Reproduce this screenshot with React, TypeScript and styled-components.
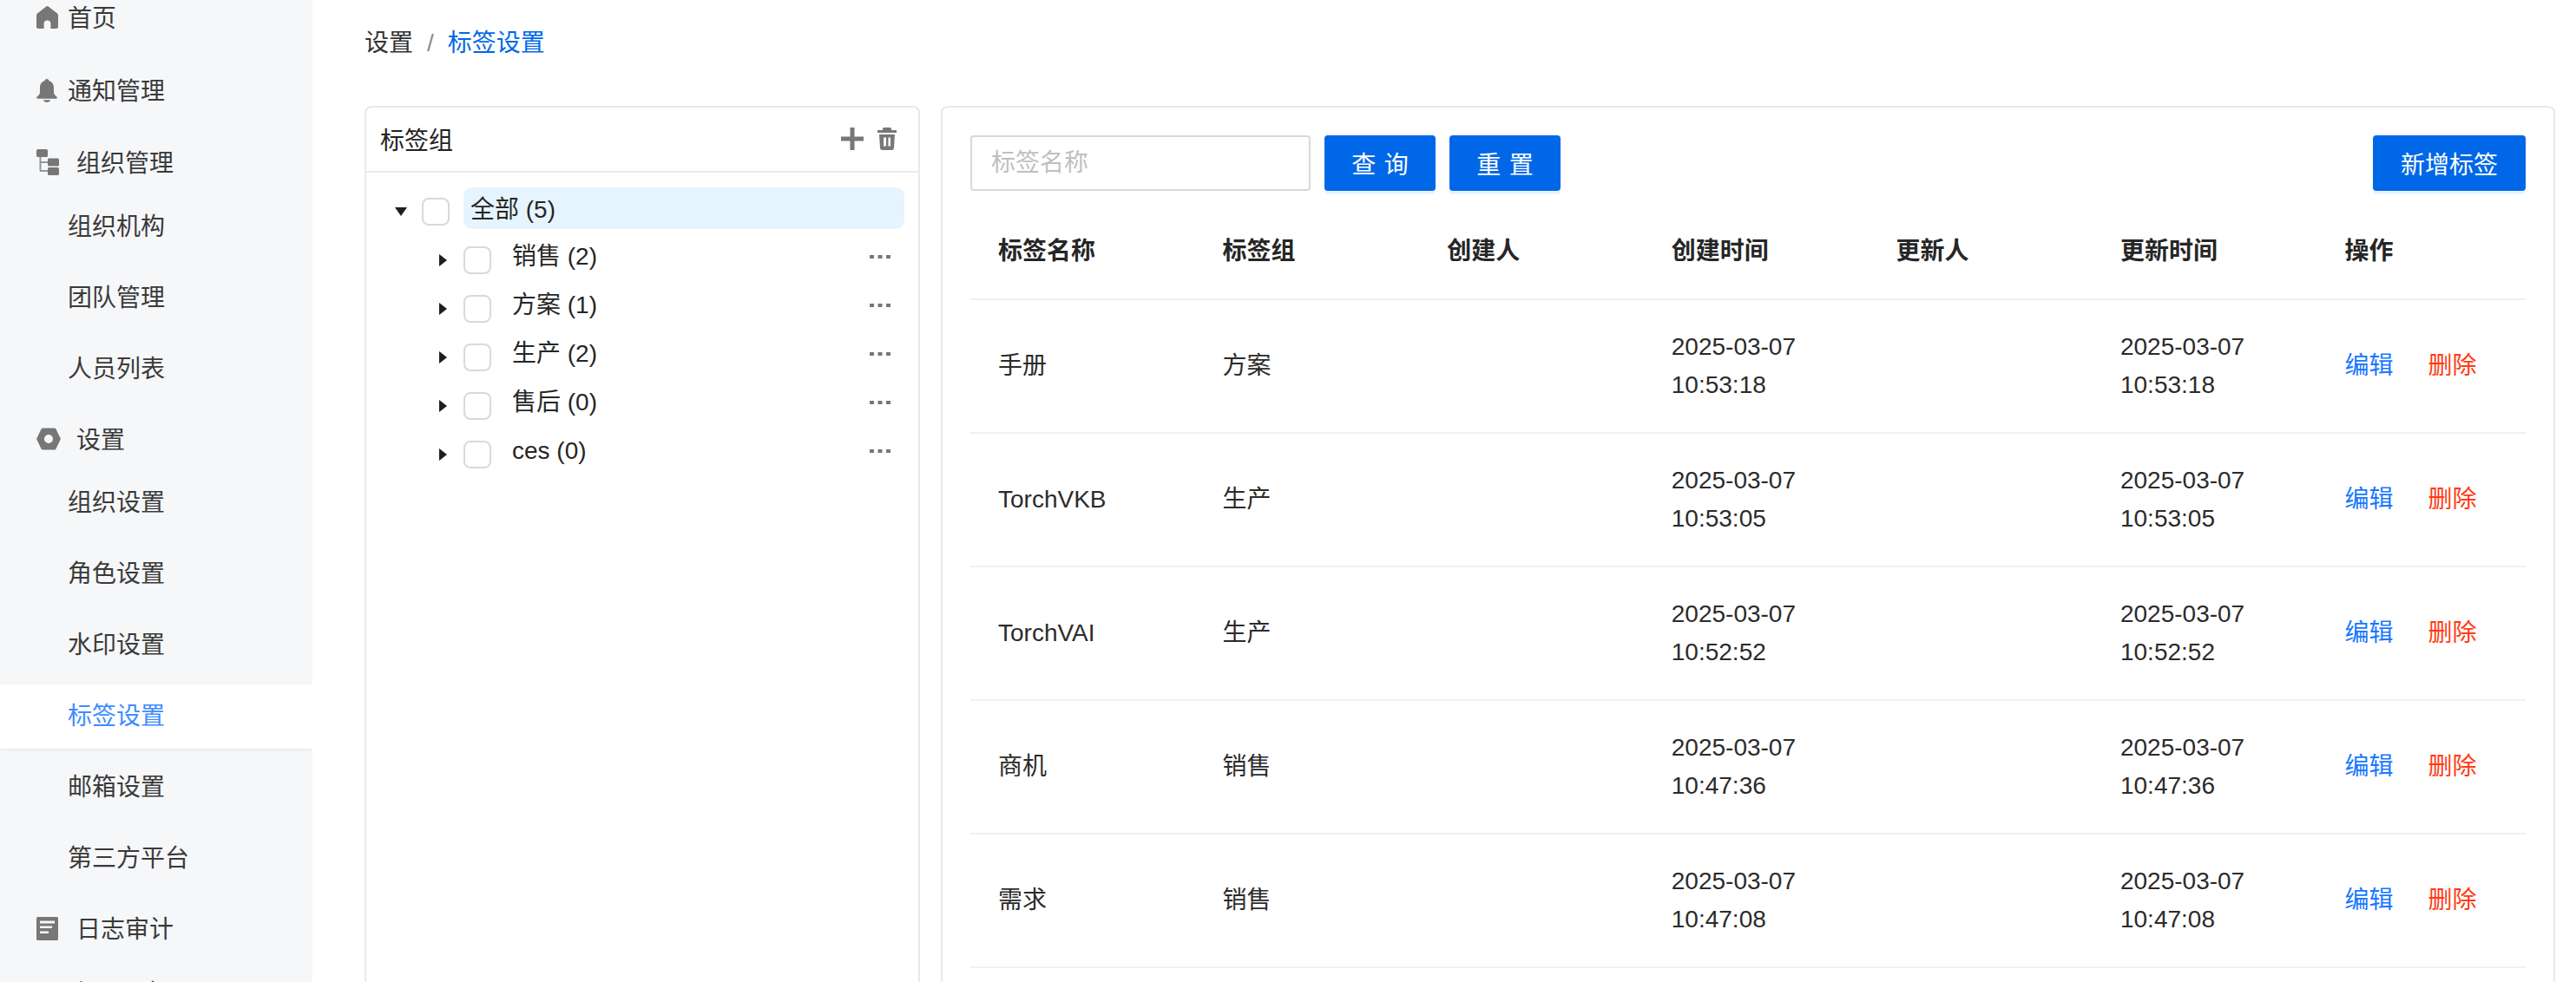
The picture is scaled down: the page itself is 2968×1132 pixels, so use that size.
import React from 'react';
import styled, { createGlobalStyle } from 'styled-components';

const Global = createGlobalStyle`
  html, body { margin: 0; padding: 0; background: #fff; }
  body { font-family: "Liberation Sans", "Noto Sans CJK SC", sans-serif; font-size: 28px; color: rgba(0,0,0,.88); }
  * { box-sizing: border-box; }
`;

const Page = styled.div`
  display: flex;
  width: 2968px;
  height: 1132px;
  overflow: hidden;
`;

const Sidebar = styled.aside`
  flex: 0 0 360px;
  height: 100%;
  overflow: hidden;
  background: #f6f7f9;
`;

const Menu = styled.nav`
  margin-top: -15px;
  display: flex;
  flex-direction: column;
`;

const MenuItem = styled.div<{ $active?: boolean; $child?: boolean; $gap?: number }>`
  display: flex;
  align-items: center;
  flex: 0 0 74px;
  height: 74px;
  margin-bottom: ${p => p.$gap ?? 8}px;
  padding-left: ${p => (p.$child ? 78 : 42)}px;
  background: ${p => (p.$active ? '#fff' : 'transparent')};
  color: ${p => (p.$active ? '#3f8cff' : '#3a3a3a')};
  box-shadow: ${p => (p.$active ? '0 2px 4px rgba(0,0,0,.05)' : 'none')};
  line-height: 40px;
`;

const IconSlot = styled.span<{ $w: number }>`
  display: flex;
  align-items: center;
  flex: 0 0 ${p => p.$w}px;
  margin-top: -4px;
  svg { display: block; fill: #777; }
`;

const Main = styled.main`
  flex: 1;
  min-width: 0;
  padding: 0 24px 0 60px;
`;

const Breadcrumb = styled.div`
  display: flex;
  align-items: center;
  height: 40px;
  margin: 30px 0 52px;
  line-height: 40px;
  color: #333;
`;

const Separator = styled.span`
  margin: 0 16px;
  color: #8c8c8c;
`;

const Current = styled.span`
  color: #0068e8;
`;

const Panels = styled.div`
  display: flex;
  gap: 24px;
  height: 1100px;
`;

const Panel = styled.section`
  border: 2px solid #e9e9ed;
  border-radius: 8px;
  background: #fff;
`;

const TreePanel = styled(Panel)`
  flex: 0 0 640px;
`;

const TablePanel = styled(Panel)`
  flex: 1;
  min-width: 0;
  padding: 32px;
`;

const TreeHeader = styled.header`
  display: flex;
  align-items: center;
  height: 75px;
  padding: 0 25px 1px 16px;
  border-bottom: 2px solid #e9e9ed;
  color: #222;
`;

const TreeTitle = styled.span`
  flex: 1;
`;

const HeaderIcon = styled.svg`
  display: block;
  fill: #777;
`;

const PlusIcon = styled(HeaderIcon)`
  margin-right: 16px;
`;

const TreeList = styled.ul`
  list-style: none;
  margin: 0;
  padding: 17px 16px 0;
`;

const TreeRow = styled.li<{ $depth: number }>`
  display: flex;
  height: 48px;
  margin-bottom: 8px;
  padding-left: ${p => p.$depth * 48}px;
`;

const Switcher = styled.span`
  display: flex;
  align-items: center;
  justify-content: center;
  flex: 0 0 48px;
  height: 48px;
  padding-top: 8px;
  svg { display: block; fill: #1f1f1f; }
`;

const CheckBox = styled.span`
  flex: 0 0 32px;
  height: 32px;
  margin: 12px 16px 0 0;
  border: 2px solid #d9d9d9;
  border-radius: 8px;
  background: #fff;
`;

const TreeLabel = styled.div<{ $selected?: boolean }>`
  display: flex;
  align-items: center;
  justify-content: space-between;
  flex: 1;
  height: 48px;
  padding: ${p => (p.$selected ? 4 : 0)}px 16px 0 8px;
  border-radius: 10px;
  background: ${p => (p.$selected ? '#e6f4ff' : 'transparent')};
  line-height: 44px;
  color: #262626;
`;

const DotsIcon = styled.svg`
  display: block;
  fill: #777;
`;

const Toolbar = styled.div`
  display: flex;
  gap: 16px;
  height: 64px;
`;

const SearchInput = styled.input`
  width: 392px;
  height: 64px;
  padding: 0 22px;
  border: 2px solid #d9d9d9;
  border-radius: 4px;
  font: inherit;
  outline: none;
  &::placeholder { color: #bfbfbf; opacity: 1; }
`;

const Button = styled.button<{ $wide?: boolean }>`
  width: ${p => (p.$wide ? 176 : 128)}px;
  height: 64px;
  padding: 0;
  border: 0;
  border-radius: 4px;
  background: #0068e8;
  color: #fff;
  font: inherit;
  box-shadow: 0 4px 0 rgba(5,145,255,.1);
  ${p => (p.$wide ? 'margin-left: auto;' : '')}
`;

const Spaced = styled.span`
  letter-spacing: .34em;
  margin-right: -.34em;
`;

const Table = styled.table`
  width: 1792px;
  margin-top: 16px;
  border-collapse: separate;
  border-spacing: 0;
  table-layout: fixed;
`;

const Col = styled.col<{ $last?: boolean }>`
  width: ${p => (p.$last ? '240.4px' : '258.6px')};
`;

const Th = styled.th`
  padding: 32px;
  border-bottom: 2px solid #f0f0f0;
  font-weight: 600;
  text-align: left;
  line-height: 44px;
  color: #262626;
`;

const Td = styled.td`
  padding: 32px;
  border-bottom: 2px solid #f0f0f0;
  line-height: 44px;
  height: 154px;
  color: #2b2b2b;
`;

const TimeLine = styled.div`
  white-space: nowrap;
`;

const Actions = styled.div`
  display: flex;
  gap: 40px;
  white-space: nowrap;
`;

const Link = styled.span<{ $danger?: boolean }>`
  color: ${p => (p.$danger ? '#ff3a12' : '#1677ff')};
`;

const HomeIcon = () => (
  <svg width="25" height="26" viewBox="0 0 25 26">
    <path fillRule="evenodd" d="M11.200.5 1 8.600Q0 9.400 0 10.700V23.500Q0 26 2.500 26H8.600V20.300A3.900 3.900 0 0 1 16.400 20.300V26H22.500Q25 26 25 23.500V10.700Q25 9.400 24 8.600L13.800.5Q12.500-.4 11.200.5Z" />
  </svg>
);

const BellIcon = () => (
  <svg width="24" height="27" viewBox="0 0 24 27">
    <path d="M12 0C13.300 0 14.200.9 14.300 2.100 18 3.100 20 6.300 20 10V15C20 17.500 21.500 19 23.300 20.500 24.300 21.300 24 22.700 22.600 22.700H1.400C0 22.700-.3 21.300.7 20.500 2.500 19 4 17.500 4 15V10C4 6.300 6 3.100 9.700 2.100 9.800.9 10.700 0 12 0Z" />
    <path d="M8 24.200H16C15.500 26 14 27 12 27S8.500 26 8 24.200Z" />
  </svg>
);

const OrgIcon = () => (
  <svg width="26" height="30" viewBox="0 0 26 30">
    <rect x="0" y="0" width="13" height="9" rx="1.500" />
    <rect x="13" y="10.500" width="13" height="9" rx="1.500" />
    <rect x="13" y="21" width="13" height="9" rx="1.500" />
    <path d="M3.500 9H5.500V14H13V16H5.500V24H13V26H5C4.200 26 3.500 25.300 3.500 24.500Z" opacity=".75" />
  </svg>
);

const HexIcon = () => (
  <svg width="28" height="26" viewBox="0 0 28 26">
    <path fillRule="evenodd" d="M7.200.5H20.800Q21.800.5 22.300 1.300L27.500 12Q28 13 27.500 14L22.300 24.700Q21.800 25.500 20.800 25.500H7.200Q6.200 25.500 5.700 24.700L.5 14Q0 13 .5 12L5.700 1.300Q6.200.5 7.200.5ZM14 8A5 5 0 1 0 14 18 5 5 0 0 0 14 8Z" />
  </svg>
);

const LogIcon = () => (
  <svg width="25" height="27" viewBox="0 0 25 27">
    <path fillRule="evenodd" d="M1.500 0H23.500Q25 0 25 1.500V25.500Q25 27 23.500 27H1.500Q0 27 0 25.500V1.500Q0 0 1.500 0ZM4 4.500V7.500H21V4.500ZM4 10.500V13H18V10.500ZM4 16.500V19H14V16.500Z" />
  </svg>
);

const Dots = () => (
  <DotsIcon width="24" height="6" viewBox="0 0 24 6">
    <rect x="0" y="1" width="5" height="4" />
    <rect x="9.500" y="1" width="5" height="4" />
    <rect x="19" y="1" width="5" height="4" />
  </DotsIcon>
);

const CaretDown = () => (
  <svg width="14" height="10" viewBox="0 0 14 10"><path d="M0 0H14L7 10Z" /></svg>
);

const CaretRight = () => (
  <svg width="9" height="14" viewBox="0 0 9 14"><path d="M0 0L9 7 0 14Z" /></svg>
);

const rows = [
  ['手册', '方案', '10:53:18'],
  ['TorchVKB', '生产', '10:53:05'],
  ['TorchVAI', '生产', '10:52:52'],
  ['商机', '销售', '10:47:36'],
  ['需求', '销售', '10:47:08'],
];

const groups = ['销售 (2)', '方案 (1)', '生产 (2)', '售后 (0)', 'ces (0)'];
const headers = ['标签名称', '标签组', '创建人', '创建时间', '更新人', '更新时间', '操作'];

export default function App() {
  return (
    <>
      <Global />
      <Page>
        <Sidebar>
          <Menu>
            <MenuItem $gap={10}><IconSlot $w={36}><HomeIcon /></IconSlot>首页</MenuItem>
            <MenuItem $gap={9}><IconSlot $w={36}><BellIcon /></IconSlot>通知管理</MenuItem>
            <MenuItem $gap={-1}><IconSlot $w={46}><OrgIcon /></IconSlot>组织管理</MenuItem>
            <MenuItem $child>组织机构</MenuItem>
            <MenuItem $child>团队管理</MenuItem>
            <MenuItem $child>人员列表</MenuItem>
            <MenuItem $gap={-2}><IconSlot $w={46}><HexIcon /></IconSlot>设置</MenuItem>
            <MenuItem $child>组织设置</MenuItem>
            <MenuItem $child>角色设置</MenuItem>
            <MenuItem $child>水印设置</MenuItem>
            <MenuItem $child $active>标签设置</MenuItem>
            <MenuItem $child>邮箱设置</MenuItem>
            <MenuItem $child>第三方平台</MenuItem>
            <MenuItem $gap={0}><IconSlot $w={46}><LogIcon /></IconSlot>日志审计</MenuItem>
            <MenuItem $child>账号日志</MenuItem>
          </Menu>
        </Sidebar>
        <Main>
          <Breadcrumb>
            设置<Separator>/</Separator><Current>标签设置</Current>
          </Breadcrumb>
          <Panels>
            <TreePanel>
              <TreeHeader>
                <TreeTitle>标签组</TreeTitle>
                <PlusIcon width="26" height="26" viewBox="0 0 26 26">
                  <path d="M10.500 0H15.500V10.500H26V15.500H15.500V26H10.500V15.500H0V10.500H10.500Z" />
                </PlusIcon>
                <HeaderIcon width="22" height="26" viewBox="0 0 22 26">
                  <path fillRule="evenodd" d="M7.500 0H14.500Q16 0 16 1.500V3H21.500Q22 3 22 3.500V5.500Q22 6 21.500 6H.5Q0 6 0 5.500V3.500Q0 3 .5 3H6V1.500Q6 0 7.500 0ZM2 8H20L19 23.500Q18.800 26 16.500 26H5.500Q3.200 26 3 23.500ZM7 11.500V21.500H10V11.500ZM12.500 11.500V21.500H15V11.500Z" />
                </HeaderIcon>
              </TreeHeader>
              <TreeList>
                <TreeRow $depth={0}>
                  <Switcher><CaretDown /></Switcher>
                  <CheckBox />
                  <TreeLabel $selected>全部 (5)</TreeLabel>
                </TreeRow>
                {groups.map(g => (
                  <TreeRow $depth={1} key={g}>
                    <Switcher><CaretRight /></Switcher>
                    <CheckBox />
                    <TreeLabel>{g}<Dots /></TreeLabel>
                  </TreeRow>
                ))}
              </TreeList>
            </TreePanel>
            <TablePanel>
              <Toolbar>
                <SearchInput placeholder="标签名称" />
                <Button><Spaced>查询</Spaced></Button>
                <Button><Spaced>重置</Spaced></Button>
                <Button $wide>新增标签</Button>
              </Toolbar>
              <Table>
                <colgroup>
                  {headers.map((h, i) => <Col key={h} $last={i === 6} />)}
                </colgroup>
                <thead>
                  <tr>{headers.map(h => <Th key={h}>{h}</Th>)}</tr>
                </thead>
                <tbody>
                  {rows.map(([name, group, time]) => (
                    <tr key={name}>
                      <Td>{name}</Td>
                      <Td>{group}</Td>
                      <Td />
                      <Td><TimeLine>2025-03-07</TimeLine><TimeLine>{time}</TimeLine></Td>
                      <Td />
                      <Td><TimeLine>2025-03-07</TimeLine><TimeLine>{time}</TimeLine></Td>
                      <Td><Actions><Link>编辑</Link><Link $danger>删除</Link></Actions></Td>
                    </tr>
                  ))}
                </tbody>
              </Table>
            </TablePanel>
          </Panels>
        </Main>
      </Page>
    </>
  );
}
